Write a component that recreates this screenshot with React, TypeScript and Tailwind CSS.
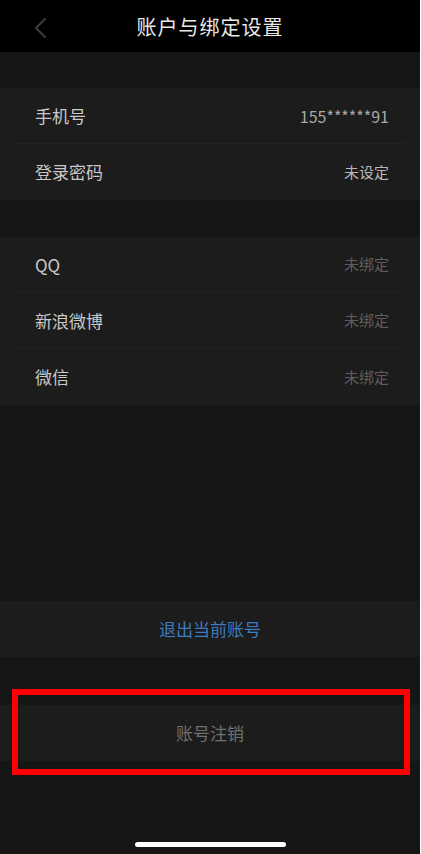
import React from 'react'

const FONT = { fontFamily: '"Noto Sans CJK SC", "Liberation Sans", sans-serif' }

interface Row {
  label: string
  value: string
  dim?: boolean
  num?: boolean
}

const ACCOUNT: Row[] = [
  { label: '手机号', value: '155******91', num: true },
  { label: '登录密码', value: '未设定' },
]

const BINDINGS: Row[] = [
  { label: 'QQ', value: '未绑定', dim: true },
  { label: '新浪微博', value: '未绑定', dim: true },
  { label: '微信', value: '未绑定', dim: true },
]

function Group({ rows }: { rows: Row[] }) {
  return (
    <div className="bg-[#1c1c1c] px-[15px]">
      {rows.map((r, i) => (
        <div
          key={r.label}
          className={`h-[56px] flex items-center justify-between pl-[20px] pr-[16px] ${
            i < rows.length - 1 ? 'border-b border-[#242424]' : ''
          }`}
        >
          <span className="text-[17px] text-[#c9c9c9]">{r.label}</span>
          <span
            className={
              r.dim
                ? 'text-[15px] text-[#5e5e5e]'
                : r.num
                  ? 'text-[16px] text-[#a8a8a8]'
                  : 'text-[15px] text-[#b8b8b8]'
            }
          >
            {r.value}
          </span>
        </div>
      ))}
    </div>
  )
}

export default function App() {
  return (
    <div className="w-[421px] h-[854px] bg-[#161616] flex flex-col border-r border-white" style={FONT}>
      {/* Header */}
      <div className="h-[52px] bg-black flex items-center justify-center relative shrink-0">
        <svg className="absolute left-[33px] top-[17px] w-[16px] h-[22px]" viewBox="0 0 16 22" fill="none">
          <path d="M12 2 L3 11 L12 20" stroke="#3c3c3c" strokeWidth={2} strokeLinecap="round" strokeLinejoin="round" />
        </svg>
        <span className="text-[20px] text-[#e8e8e8] tracking-[1px] mt-[2px]">账户与绑定设置</span>
      </div>

      <div className="h-[36px] shrink-0" />
      <Group rows={ACCOUNT} />
      <div className="h-[37px] shrink-0" />
      <Group rows={BINDINGS} />

      <div className="h-[196px] shrink-0" />
      <div className="h-[56px] bg-[#1c1c1c] flex items-center justify-center shrink-0">
        <span className="text-[17px] text-[#3f7bc0]">退出当前账号</span>
      </div>

      <div className="h-[48px] shrink-0" />
      <div className="relative shrink-0">
        <div className="h-[56px] bg-[#1c1c1c] flex items-center justify-center">
          <span className="text-[17px] text-[#707070]">账号注销</span>
        </div>
        <div className="absolute left-[12px] w-[398px] top-[-16px] h-[86px] border-[6px] border-[#ff0000]" />
      </div>

      <div className="flex-1 flex items-end justify-center pb-[7px]">
        <div className="w-[151px] h-[5px] rounded-full bg-white" />
      </div>
    </div>
  )
}
